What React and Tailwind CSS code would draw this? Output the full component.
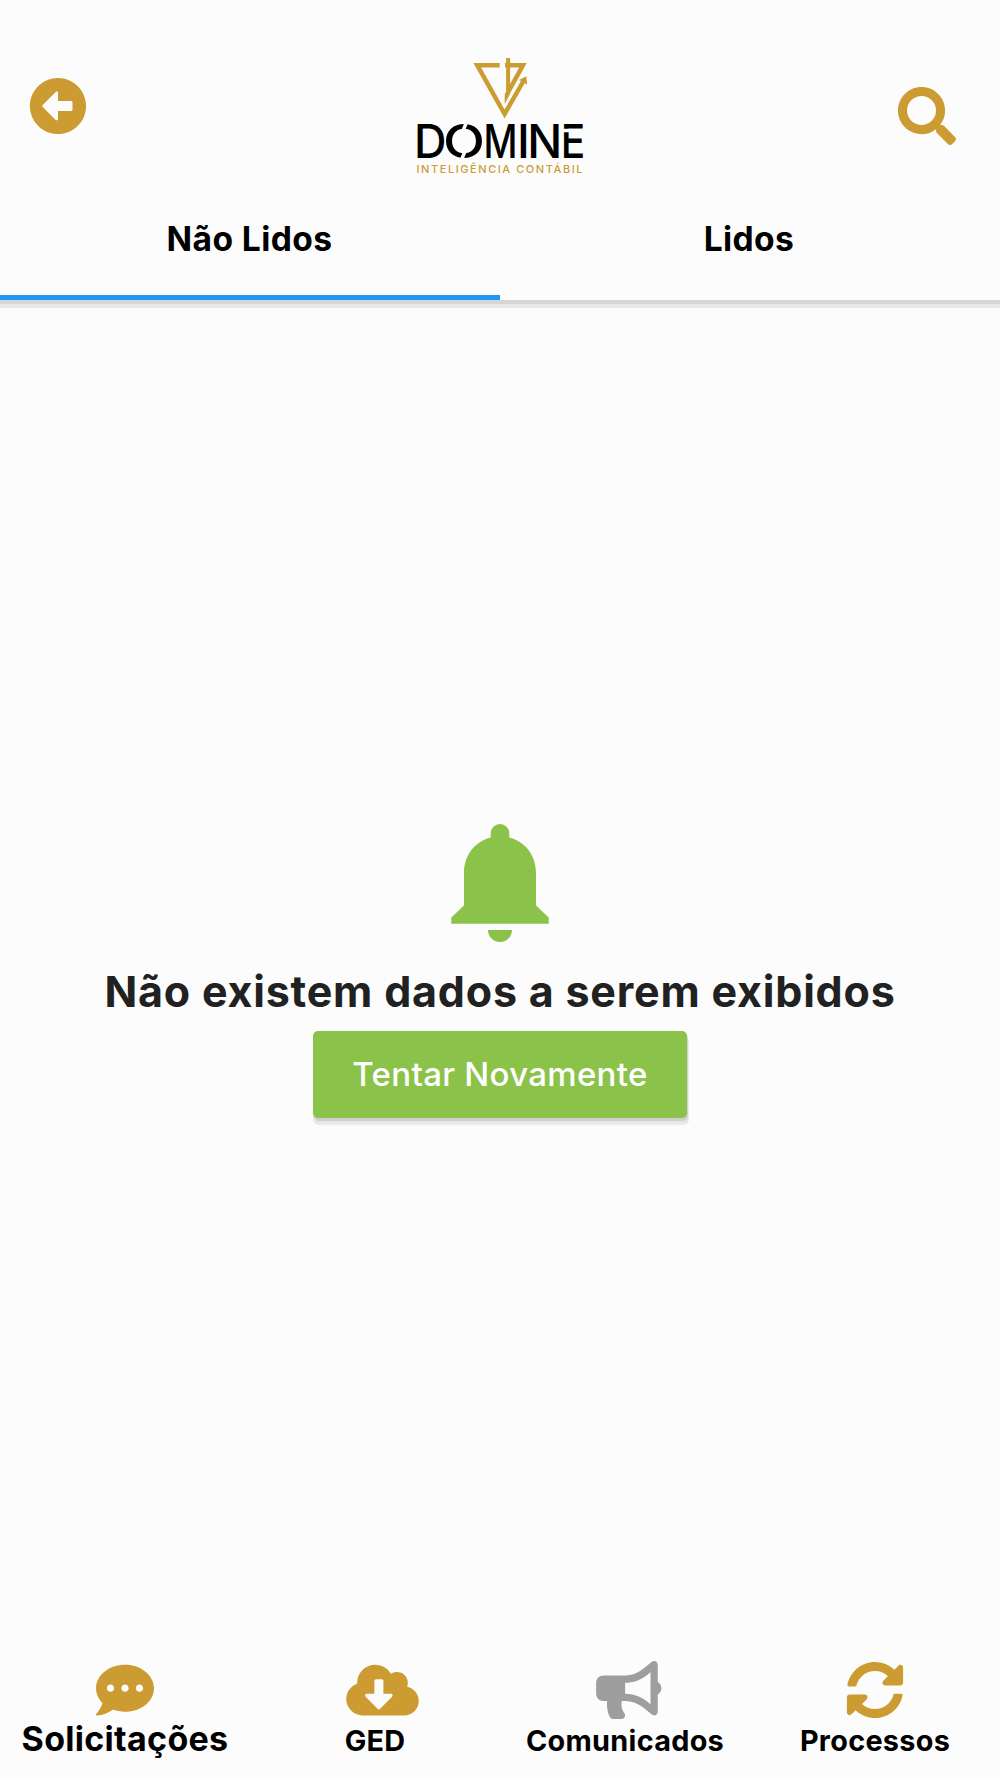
import React from "react";
import {
  FaArrowAltCircleLeft,
  FaSearch,
  FaCommentDots,
  FaCloudDownloadAlt,
  FaBullhorn,
  FaSyncAlt,
} from "react-icons/fa";

function Logo() {
  return (
    <svg width="180" height="130" viewBox="410 50 180 130" role="img" aria-label="Domine">
      <g fill="none" stroke="#cc9c33" strokeWidth="4.5">
        <path d="M499.700 65.200H477.200L504.600 114L523.500 81" strokeMiterlimit="10" />
        <path d="M505 65.200H523L508.500 91.500" strokeMiterlimit="10" />
        <path d="M508.100 58V94" strokeWidth="4" />
      </g>
      <path d="M504.700 104V94L510 86V94Z" fill="#cc9c33" />
      <path d="M519 80L526.300 76.200L527.200 84.500Z" fill="#cc9c33" />
      <text y="158" fontFamily="Inter, sans-serif" fontSize="47" fontWeight="500" fill="#000">
        <tspan x="414" textLength="32.5" lengthAdjust="spacingAndGlyphs">D</tspan>
        <tspan x="443" textLength="42" lengthAdjust="spacingAndGlyphs">O</tspan>
        <tspan x="483.5" textLength="34" lengthAdjust="spacingAndGlyphs">M</tspan>
        <tspan x="517">I</tspan>
        <tspan x="527.3" textLength="35" lengthAdjust="spacingAndGlyphs">N</tspan>
        <tspan x="560.8" textLength="24.500" lengthAdjust="spacingAndGlyphs">E</tspan>
      </text>
      <path d="M467 121L462.500 132M465.500 150L461 161" stroke="#fcfcfc" strokeWidth="3.500" />
      <path d="M562.500 130.500H570" stroke="#fcfcfc" strokeWidth="3.500" />
      <text
        x="416.500"
        y="173"
        textLength="166"
        fontFamily="Inter, sans-serif"
        fontSize="11"
        fontWeight="500"
        fill="#cc9c33"
      >
        INTELIGÊNCIA CONTÁBIL
      </text>
    </svg>
  );
}

function Bell() {
  return (
    <svg width="98" height="119" viewBox="0 0 98 119" fill="#8bc34a">
      <path d="M0.3 99.7V93.5L13 81.5V49C13 31 24 17.500 39.700 13.500V9.300A9.300 9.300 0 0 1 58.300 9.300V13.500C74 17.500 85 31 85 49V81.500L97.700 93.500V99.700Z" />
      <path d="M37 106H61A12 12 0 0 1 37 106Z" />
    </svg>
  );
}

const items = [
  { label: "Solicitações", Icon: FaCommentDots, icon: "w-[58px] text-[#cc9c33]", text: "text-[34px] tracking-[0.3px]" },
  { label: "GED", Icon: FaCloudDownloadAlt, icon: "w-[73px] text-[#cc9c33]", text: "pt-[2px] text-[28.8px] tracking-[0.2px]" },
  { label: "Comunicados", Icon: FaBullhorn, icon: "w-[65.5px] text-[#9e9e9e]", text: "pt-[2px] text-[28.8px] tracking-[0.3px]" },
  { label: "Processos", Icon: FaSyncAlt, icon: "w-[58px] text-[#cc9c33]", text: "pt-[2px] text-[28.8px] tracking-[0.3px]" },
];

export default function App() {
  return (
    <div className="flex h-[1778px] w-[1000px] flex-col bg-[#fcfcfc] font-['Inter',sans-serif] text-black">
      <header className="flex h-[300px] shrink-0 flex-col shadow-[0_4px_0_#d6d6d6,0_8px_0_#e8e8e8]">
        <div className="flex h-[200px] items-start justify-between pr-[44px] pl-[29px]">
          <button className="mt-[77px]" aria-label="Voltar">
            <FaArrowAltCircleLeft className="size-[58px] text-[#cc9c33]" />
          </button>
          <div className="mt-[50px] ml-[15px]">
            <Logo />
          </div>
          <button className="mt-[87px]" aria-label="Buscar">
            <FaSearch className="size-[58px] text-[#cc9c33]" />
          </button>
        </div>
        <div className="grid h-[100px] grid-cols-2 text-[33.6px] font-bold tracking-[0.4px]">
          <button className="flex justify-center border-b-5 border-[#2196f3] pt-[19px] pr-[1px] leading-10">Não Lidos</button>
          <button className="flex justify-center pt-[19px] pr-[2px] leading-10">Lidos</button>
        </div>
      </header>

      <main className="flex grow flex-col items-center pt-[524px]">
        <Bell />
        <h1 className="mt-[23px] text-[43px] leading-[50px] font-bold tracking-[0.8px] whitespace-nowrap text-[#212121]">
          Não existem dados a serem exibidos
        </h1>
        <button className="mt-[15px] flex h-[87px] w-[374px] items-center justify-center rounded-[5px] bg-[#8bc34a] text-[33px] font-medium tracking-[0.3px] text-white shadow-[1px_3px_1px_#cfcfcf,1px_6px_1px_1px_#e8e8e8]">
          Tentar Novamente
        </button>
      </main>

      <nav className="grid h-[117px] shrink-0 grid-cols-4">
        {items.map(({ label, Icon, icon, text }) => (
          <div key={label} className="flex flex-col items-center">
            <div className="flex h-[58px] w-[58px]">
              <Icon className={"h-[58px] max-w-none shrink-0 " + icon} />
            </div>
            <span className={"leading-10 font-bold " + text}>{label}</span>
          </div>
        ))}
      </nav>
    </div>
  );
}
